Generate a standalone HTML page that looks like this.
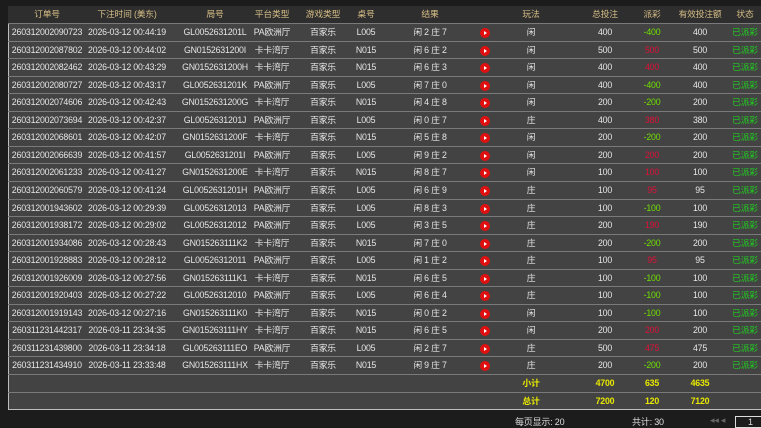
<!DOCTYPE html>
<html><head><meta charset="utf-8"><style>
*{margin:0;padding:0;box-sizing:border-box}
body{width:761px;height:425px;background:#1c1c1c;overflow:hidden;font-family:"Liberation Sans","Noto Sans CJK SC",sans-serif;font-size:8.8px;letter-spacing:-0.2px;color:#e6e6e6;position:relative}
#t{position:absolute;left:8px;top:6px;width:760px;height:404px;background:#434343;border:1px solid #bdbdbd;border-right:none}
.r{position:absolute;left:0;width:760px;height:17.6px;border-bottom:1px solid #7a7a7a}
.r span{position:absolute;top:0;line-height:17px;transform:translateX(-50%);white-space:nowrap}
.h{background:#2e2e2e;color:#d6bd86;top:0;height:18px}
.g{color:#6fe000}.rd{color:#e0103a}.st{color:#20d020}
.y{color:#e8e800;font-weight:bold}
.ic{width:10px;height:10px;border-radius:50%;background:#e01010;top:4px!important;transform:none!important}
.ic:after{content:"";position:absolute;left:4px;top:3px;border-left:3px solid #fff;border-top:2px solid transparent;border-bottom:2px solid transparent}
.f{position:absolute;top:415px;color:#ddd;font-size:9px}
</style></head><body>
<div id="t"></div>
<div id="rows"></div>
<div class="f" style="left:515px">每页显示: 20</div>
<div class="f" style="left:632px">共计: 30</div>
<div class="f" style="left:710px;color:#666">◂◂ ◂</div>
<div style="position:absolute;left:735px;top:416px;width:30px;height:12px;border:1px solid #ddd;color:#ddd;font-size:9px;padding-left:12px">1</div>
<script>
var cx=[47,127,215,272,323,366,430,485,531,605,652,700,745];
var P="PA欧洲厅",K="卡卡湾厅";
var d=[
["260312002090723","2026-03-12 00:44:19","GL0052631201L",P,"L005","闲 2 庄 7","闲","400","-400","400"],
["260312002087802","2026-03-12 00:44:02","GN0152631200I",K,"N015","闲 6 庄 2","闲","500","500","500"],
["260312002082462","2026-03-12 00:43:29","GN0152631200H",K,"N015","闲 6 庄 3","闲","400","400","400"],
["260312002080727","2026-03-12 00:43:17","GL0052631201K",P,"L005","闲 7 庄 0","闲","400","-400","400"],
["260312002074606","2026-03-12 00:42:43","GN0152631200G",K,"N015","闲 4 庄 8","闲","200","-200","200"],
["260312002073694","2026-03-12 00:42:37","GL0052631201J",P,"L005","闲 0 庄 7","庄","400","380","380"],
["260312002068601","2026-03-12 00:42:07","GN0152631200F",K,"N015","闲 5 庄 8","闲","200","-200","200"],
["260312002066639","2026-03-12 00:41:57","GL0052631201I",P,"L005","闲 9 庄 2","闲","200","200","200"],
["260312002061233","2026-03-12 00:41:27","GN0152631200E",K,"N015","闲 8 庄 7","闲","100","100","100"],
["260312002060579","2026-03-12 00:41:24","GL0052631201H",P,"L005","闲 6 庄 9","庄","100","95","95"],
["260312001943602","2026-03-12 00:29:39","GL00526312013",P,"L005","闲 8 庄 3","庄","100","-100","100"],
["260312001938172","2026-03-12 00:29:02","GL00526312012",P,"L005","闲 3 庄 5","庄","200","190","190"],
["260312001934086","2026-03-12 00:28:43","GN015263111K2",K,"N015","闲 7 庄 0","庄","200","-200","200"],
["260312001928883","2026-03-12 00:28:12","GL00526312011",P,"L005","闲 1 庄 2","庄","100","95","95"],
["260312001926009","2026-03-12 00:27:56","GN015263111K1",K,"N015","闲 6 庄 5","庄","100","-100","100"],
["260312001920403","2026-03-12 00:27:22","GL00526312010",P,"L005","闲 6 庄 4","庄","100","-100","100"],
["260312001919143","2026-03-12 00:27:16","GN015263111K0",K,"N015","闲 0 庄 2","闲","100","-100","100"],
["260311231442317","2026-03-11 23:34:35","GN015263111HY",K,"N015","闲 6 庄 5","闲","200","200","200"],
["260311231439800","2026-03-11 23:34:18","GL005263111EO",P,"L005","闲 2 庄 7","庄","500","475","475"],
["260311231434910","2026-03-11 23:33:48","GN015263111HX",K,"N015","闲 9 庄 7","庄","200","-200","200"]];
var h='<div class="r h" style="top:6px;left:8px">';
["订单号","下注时间 (美东)","局号","平台类型","游戏类型","桌号","结果","","玩法","总投注","派彩","有效投注额","状态"].forEach(function(t,i){h+='<span style="left:'+(cx[i]-8)+'px">'+t+'</span>'});
h+='</div>';
function s(i,t,c){return '<span '+(c?'class="'+c+'" ':'')+'style="left:'+(cx[i]-8)+'px">'+t+'</span>'}
d.forEach(function(r,k){
 var top=24+k*17.55;
 h+='<div class="r" style="top:'+top+'px;left:8px">'+s(0,r[0])+s(1,r[1])+s(2,r[2])+s(3,r[3])+s(4,"百家乐")+s(5,r[4])+s(6,r[5])+'<span class="ic" style="left:'+(cx[7]-13)+'px"></span>'+s(8,r[6])+s(9,r[7])+s(10,r[8],r[8][0]=="-"?"g":"rd")+s(11,r[9])+s(12,"已派彩","st")+'</div>';
});
h+='<div class="r" style="top:375px;left:8px">'+s(8,"小计","y")+s(9,"4700","y")+s(10,"635","y")+s(11,"4635","y")+'</div>';
h+='<div class="r" style="top:392.5px;left:8px;border:none">'+s(8,"总计","y")+s(9,"7200","y")+s(10,"120","y")+s(11,"7120","y")+'</div>';
document.getElementById("rows").innerHTML=h;
</script>
</body></html>
